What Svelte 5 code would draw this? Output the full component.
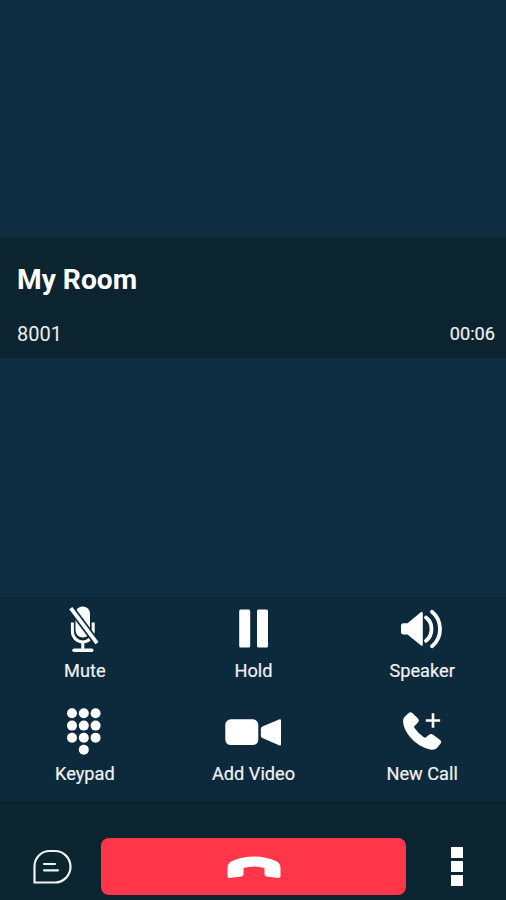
<script lang="ts">
  let title = 'My Room';
  let number = '8001';
  let duration = '00:06';

  const actions = [
    { id: 'mute', label: 'Mute' },
    { id: 'hold', label: 'Hold' },
    { id: 'speaker', label: 'Speaker' },
    { id: 'keypad', label: 'Keypad' },
    { id: 'video', label: 'Add Video' },
    { id: 'newcall', label: 'New Call' }
  ];

  const keypadDots = [
    [18, 8.3], [29.8, 8.3], [41.6, 8.3],
    [18, 20.6], [29.8, 20.6], [41.6, 20.6],
    [18, 32.8], [29.8, 32.8], [41.6, 32.8],
    [29.8, 44.7]
  ];
</script>

<main class="call-screen">
  <header class="call-info">
    <h1>{title}</h1>
    <div class="call-meta">
      <span>{number}</span>
      <span class="duration">{duration}</span>
    </div>
  </header>

  <section class="controls">
    {#each actions as action (action.id)}
      <button class="action">
        <svg width="60" height="50" viewBox="0 0 60 50" fill="#fff" aria-hidden="true">
          {#if action.id === 'mute'}
            <rect x="21.5" y="1.5" width="14.5" height="31" rx="7.2" />
            <path class="stroke" d="M18.4 17.500v9a10.400 10.400 0 0 0 20.800 0v-9M28.800 37v8" />
            <path class="stroke base" d="M20 45.200h17.800" />
            <path class="slash-gap" d="M16.800 3.200 43 38.200" />
            <path class="stroke slash" d="M16.800 3.200 43 38.200" />
          {:else if action.id === 'hold'}
            <rect x="16.2" y="4.5" width="11" height="38" rx="1.5" />
            <rect x="34" y="4.5" width="11" height="38" rx="1.5" />
          {:else if action.id === 'speaker'}
            <path d="M11.500 18.300h4L28.800 7.200q2-1.400 2 1v31q0 2.400-2 1L15.500 29.400h-4q-2.500 0-2.500-2.500v-6q0-2.600 2.500-2.600z" />
            <path class="stroke wave" d="M34 12.500q5.500 4 5.500 11.500T34 35.800" />
            <path class="stroke wave" d="M40 6.800q8 6.500 8 17.200t-8 17.200" />
          {:else if action.id === 'keypad'}
            {#each keypadDots as [cx, cy]}
              <circle {cx} {cy} r="5" />
            {/each}
          {:else if action.id === 'video'}
            <rect x="2.3" y="14.3" width="33" height="25.7" rx="5.5" />
            <path d="M37.800 24q0-1.800 1.600-2.600L56 14.400q2-.8 2 1v23.800q0 1.800-2 1L39.400 33q-1.600-.8-1.600-2.500z" />
          {:else}
            <path d="M12.500 12 17 7.800q1.500-1.200 3 0l6 5.700q1.800 1.900.2 3.800l-3.700 3.600q-.9 1 0 2.200 3.800 5.500 9.300 9.200 1.200.8 2.200-.1l3.400-2.700q1.800-1.300 3.700.2l7.300 5.600q1.500 1.400.4 3l-4 5q-1.800 1.800-5.700 1.400-13-2.500-21.500-13.200-6-7.600-6.600-14.800-.1-3 1.500-4.700z" />
            <path class="stroke plus" d="M41 8.300v14.400M33.800 15.500h14.400" />
          {/if}
        </svg>
        <span>{action.label}</span>
      </button>
    {/each}
  </section>

  <footer class="bottom-bar">
    <button class="side" aria-label="Chat">
      <svg width="42" height="38" viewBox="0 0 42 38" fill="none" stroke="#f1f1f1" stroke-width="2.2" stroke-linecap="round" aria-hidden="true">
        <path d="M3.500 34.500V18.500A15 15.500 0 0 1 18.500 3h5.500a15.500 15.750 0 0 1 0 31.500z" />
        <path d="M13 16h11M13 22.300h14" />
      </svg>
    </button>
    <button class="hangup" aria-label="End call">
      <svg width="56" height="24" viewBox="0 0 56 24" fill="#fff" aria-hidden="true">
        <path d="M3.500 23q-2 0-2-2v-8q0-4.500 4-6.800Q15.500 1.500 28 1.500t22.500 4.700q4 2.300 4 6.800v8q0 2-2 1.900l-12-1.500q-2-.3-2-2.300v-6Q28 9.900 17.500 13.100v6q0 2-2 2.300z" />
      </svg>
    </button>
    <button class="side more" aria-label="More">
      <i></i><i></i><i></i>
    </button>
  </footer>
</main>

<style>
  :global(body) {
    margin: 0;
    background: #0f2d40;
  }

  .call-screen {
    display: flex;
    flex-direction: column;
    box-sizing: border-box;
    height: 900px;
    padding-top: 238px;
    background: #0f2d40;
    color: #fff;
    font-family: Roboto, sans-serif;
  }

  button {
    padding: 0;
    border: none;
    background: none;
    color: inherit;
    font: inherit;
    cursor: pointer;
  }

  svg {
    display: block;
  }

  .call-info {
    box-sizing: border-box;
    height: 120px;
    padding: 25px 11px 0 17px;
    background: #0b2430;
  }

  h1 {
    margin: 0;
    font-size: 28.2px;
    font-weight: 700;
    line-height: 34px;
  }

  .call-meta {
    display: flex;
    justify-content: space-between;
    align-items: center;
    margin-top: 25px;
    font-size: 20px;
    line-height: 24px;
    color: #eee;
  }

  .duration {
    font-size: 18.2px;
    -webkit-text-stroke: 0.2px #eee;
  }

  .controls {
    display: grid;
    grid-template-columns: repeat(3, 1fr);
    grid-auto-rows: 103px;
    box-sizing: border-box;
    height: 204px;
    margin-top: auto;
    padding-top: 8px;
    background: #0c2a3b;
  }

  .action {
    display: flex;
    flex-direction: column;
    align-items: center;
    font-size: 18.2px;
    line-height: 22px;
    color: #f1f1f1;
  }

  .action span {
    margin-top: 5px;
    padding-left: 1px;
    -webkit-text-stroke: 0.2px #f1f1f1;
  }

  .action:nth-child(n + 4) svg {
    margin-top: -3px;
  }

  .action:nth-child(n + 4) span {
    margin-top: 8px;
  }

  .stroke {
    fill: none;
    stroke: #fff;
    stroke-width: 3;
  }

  .base {
    stroke-width: 3.4;
    stroke-linecap: round;
  }

  .slash {
    stroke-width: 3.8;
  }

  .slash-gap {
    fill: none;
    stroke: #0c2a3b;
    stroke-width: 7.2;
  }

  .wave {
    stroke-width: 3.8;
    stroke-linecap: round;
  }

  .plus {
    stroke-width: 2.6;
  }

  .bottom-bar {
    display: grid;
    grid-template-columns: 101px 305px 100px;
    box-sizing: border-box;
    height: 99px;
    padding: 37px 0 5px;
    background: #0a2430;
  }

  .side {
    display: flex;
    align-items: center;
    justify-content: center;
  }

  .side svg {
    margin-left: 3px;
  }

  .hangup {
    display: flex;
    align-items: center;
    justify-content: center;
    border-radius: 8px;
    background: #ff3649;
  }

  .more {
    flex-direction: column;
    gap: 3px;
    padding-left: 2px;
  }

  .more i {
    width: 12px;
    height: 11px;
    background: #fff;
  }
</style>
